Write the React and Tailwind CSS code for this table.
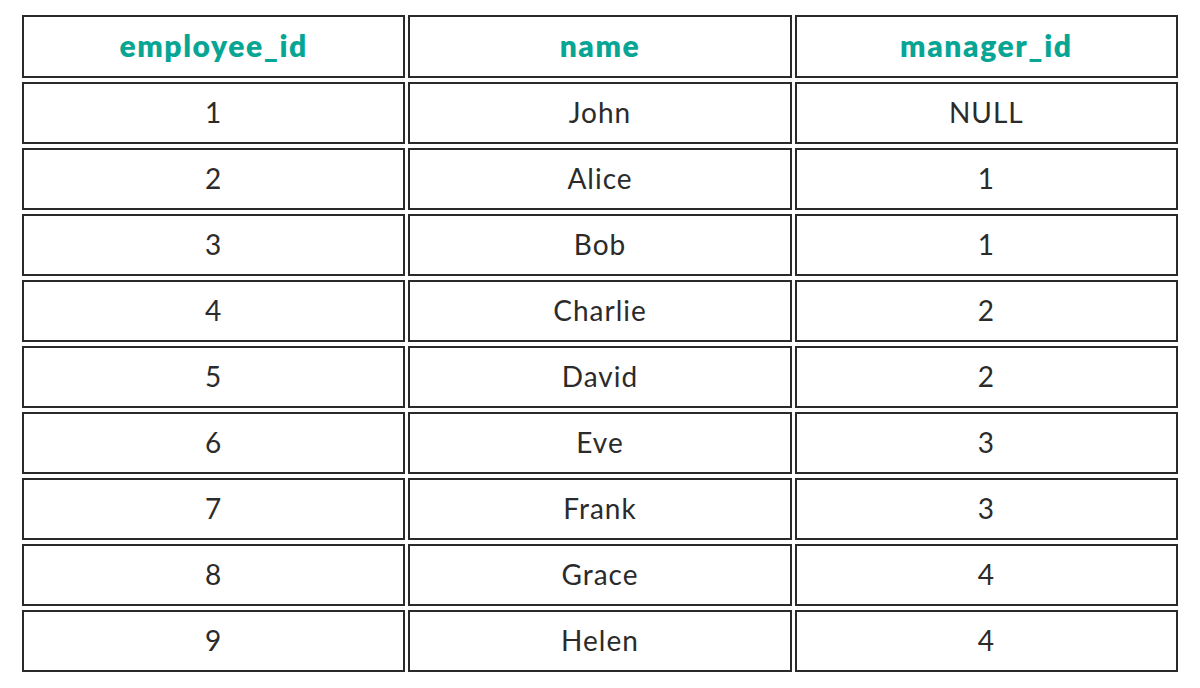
import React from "react";

const rows = [
  ["1", "John", "NULL"],
  ["2", "Alice", "1"],
  ["3", "Bob", "1"],
  ["4", "Charlie", "2"],
  ["5", "David", "2"],
  ["6", "Eve", "3"],
  ["7", "Frank", "3"],
  ["8", "Grace", "4"],
  ["9", "Helen", "4"],
];

export default function App() {
  return (
    <div className="w-[1200px] h-[688px] bg-white pt-[15px] px-[22px]" style={{ fontFamily: "Lato, 'Open Sans', sans-serif" }}>
      <div className="grid grid-cols-3 gap-x-[3px] gap-y-[4px]">
        {["employee_id", "name", "manager_id"].map((h) => (
          <div key={h} className="h-[63px] pb-[2px] border-2 border-[#2a2a2a] flex items-center justify-center text-[30px] font-extrabold text-[#07a594] tracking-[1.6px]">
            {h}
          </div>
        ))}
        {rows.map((r, i) =>
          r.map((c, j) => (
            <div key={i + "-" + j} className="h-[62px] pb-[2px] border-2 border-[#2a2a2a] flex items-center justify-center text-[28px] text-[#2b2b2b] tracking-[1px]">
              {c}
            </div>
          ))
        )}
      </div>
    </div>
  );
}
